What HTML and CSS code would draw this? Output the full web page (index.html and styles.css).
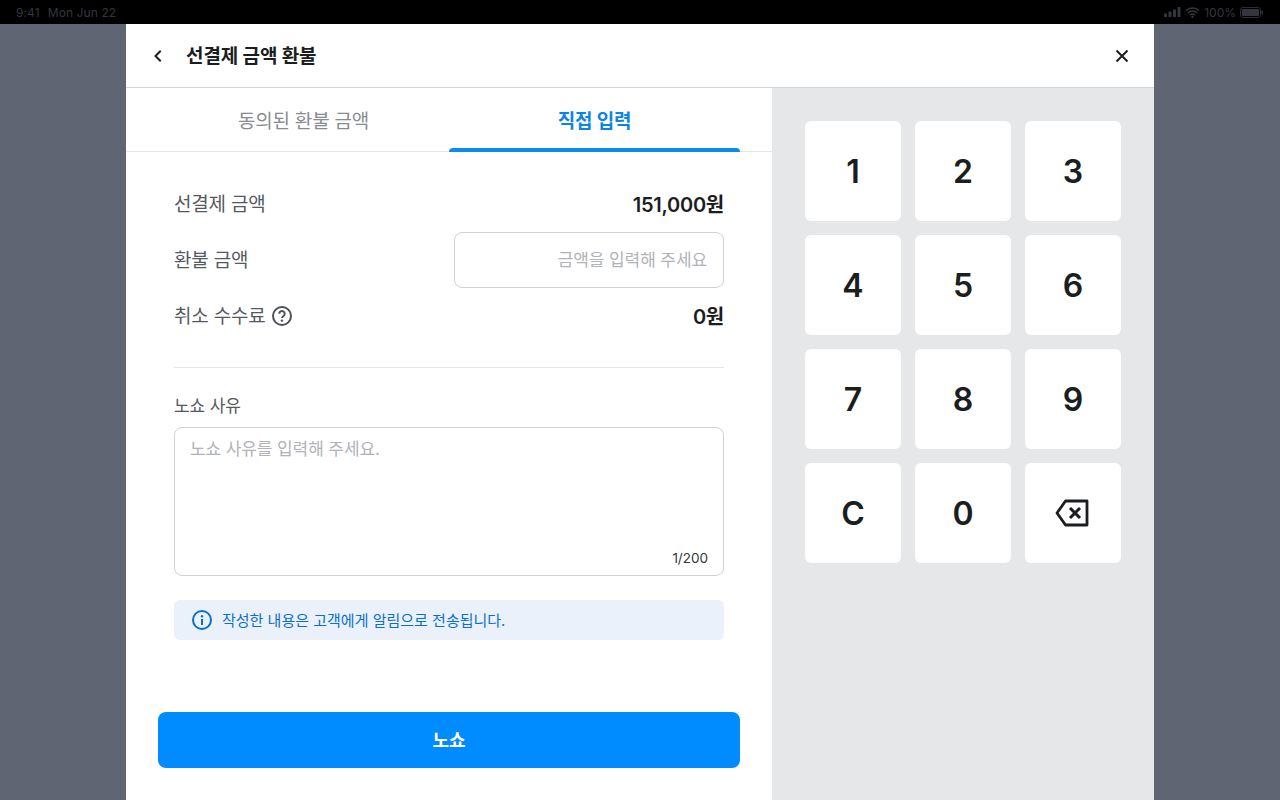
FILE: index.html
```html
<!DOCTYPE html>
<html lang="ko">
<head>
<meta charset="utf-8">
<title>선결제 금액 환불</title>
<link rel="stylesheet" href="styles.css">
</head>
<body>
<div class="status">
  <div class="status-left"><span>9:41</span><span>Mon Jun 22</span></div>
  <div class="status-right">
    <svg width="17" height="10" viewBox="0 0 17 10"><rect x="0" y="6.5" width="3" height="3.5" rx=".6"/><rect x="4.5" y="4.5" width="3" height="5.5" rx=".6"/><rect x="9" y="2.5" width="3" height="7.5" rx=".6"/><rect x="13.5" y="0" width="3" height="10" rx=".6"/></svg>
    <svg width="15" height="11" viewBox="0 0 15 11"><path d="M1 3.8a9.2 9.2 0 0 1 13 0M3 6a6.3 6.3 0 0 1 9 0M5 8.1a3.4 3.4 0 0 1 5 0" fill="none" stroke="#33373d" stroke-width="1.5"/><circle cx="7.5" cy="9.7" r="1.2"/></svg>
    <span>100%</span>
    <svg width="23" height="11" viewBox="0 0 23 11"><rect x=".5" y=".5" width="20" height="10" rx="2.5" fill="none" stroke="#2a2d32"/><rect x="2" y="2" width="17" height="7" rx="1"/><rect x="21.500" y="3.500" width="1.400" height="4" rx=".7"/></svg>
  </div>
</div>
<main class="backdrop">
  <section class="modal">
    <header class="modal-head">
      <div class="head-left">
        <svg class="ico-back" width="24" height="24" viewBox="0 0 24 24"><path d="M14 7.500 9.500 12l4.500 4.500" fill="none" stroke="#1b1d1f" stroke-width="2" stroke-linecap="square"/></svg>
        <h1>선결제 금액 환불</h1>
      </div>
      <svg width="24" height="24" viewBox="0 0 24 24"><path d="M6.500 6.500l11 11M17.500 6.500l-11 11" fill="none" stroke="#1b1d1f" stroke-width="2"/></svg>
    </header>
    <div class="modal-body">
      <div class="left">
        <nav class="tabs">
          <div class="tab">동의된 환불 금액</div>
          <div class="tab tab-on">직접 입력</div>
        </nav>
        <div class="form">
          <div class="row row-a"><span class="lab">선결제 금액</span><strong class="val">151,000원</strong></div>
          <div class="row row-b"><span class="lab">환불 금액</span><div class="amount">금액을 입력해 주세요</div></div>
          <div class="row row-c">
            <span class="lab lab-help">취소 수수료
              <svg width="22" height="22" viewBox="0 0 22 22"><circle cx="11" cy="11" r="9" fill="none" stroke="#4e5258" stroke-width="2"/><path d="M8.300 8.800a2.700 2.700 0 1 1 4.200 2.200c-.9.6-1.500 1.100-1.500 2.100" fill="none" stroke="#4e5258" stroke-width="2"/><circle cx="11" cy="15.600" r="1.200" fill="#4e5258"/></svg>
            </span>
            <strong class="val">0원</strong>
          </div>
          <hr class="rule">
          <label class="sub">노쇼 사유</label>
          <div class="area">
            <span class="area-ph">노쇼 사유를 입력해 주세요.</span>
            <span class="count">1/200</span>
          </div>
          <div class="notice">
            <svg width="22" height="22" viewBox="0 0 22 22"><circle cx="11" cy="11" r="9" fill="none" stroke="#0b6fd0" stroke-width="2"/><circle cx="11" cy="7.200" r="1.200" fill="#0b6fd0"/><path d="M11 10v6" stroke="#0b6fd0" stroke-width="2"/></svg>
            <span>작성한 내용은 고객에게 알림으로 전송됩니다.</span>
          </div>
        </div>
        <div class="cta">노쇼</div>
      </div>
      <div class="right">
        <div class="pad">
          <div class="key">1</div><div class="key">2</div><div class="key">3</div>
          <div class="key">4</div><div class="key">5</div><div class="key">6</div>
          <div class="key">7</div><div class="key">8</div><div class="key">9</div>
          <div class="key">C</div><div class="key">0</div>
          <div class="key"><svg class="ico-del" width="34" height="28" viewBox="0 0 34 28"><path d="M32 2H10.500L2 14l8.500 12H32z" fill="none" stroke="#1b1d1f" stroke-width="2.800" stroke-linejoin="round"/><path d="M15 9l10 10M25 9 15 19" fill="none" stroke="#1b1d1f" stroke-width="3"/></svg></div>
        </div>
      </div>
    </div>
  </section>
</main>
</body>
</html>
```
FILE: styles.css
```css
* { box-sizing: border-box; }
html, body { margin: 0; height: 800px; overflow: hidden; }
body {
  font-family: Inter, "Noto Sans CJK KR", sans-serif;
  color: #1b1d1f;
  background: #5f6572;
}
.status {
  height: 24px;
  background: #000;
  color: #33373d;
  font-size: 12px;
  display: flex;
  justify-content: space-between;
  align-items: center;
  padding: 0 16px;
  fill: #33373d;
}
.status-left { display: flex; gap: 8px; letter-spacing: .1px; }
.status-right { display: flex; align-items: center; gap: 4px; margin-right: 1px; }
.backdrop { height: 776px; padding: 0 126px; }
.modal { height: 776px; background: #fff; display: flex; flex-direction: column; }
.modal-head {
  height: 64px;
  border-bottom: 1px solid #d3d5d8;
  display: flex;
  align-items: center;
  justify-content: space-between;
  padding: 0 20px;
}
.head-left { display: flex; align-items: center; gap: 16px; }
h1 { margin: 0 0 2px; font-size: 19px; letter-spacing: -.1px; font-weight: 700; }
.modal-body { flex: 1; display: flex; min-height: 0; }
.left { width: 646px; display: flex; flex-direction: column; }
.right { flex: 1; background: #e5e7e9; padding: 33px; }
.tabs { height: 64px; display: flex; padding: 0 32px; border-bottom: 1px solid #e5e7e9; }
.tab {
  flex: 1;
  display: flex;
  align-items: center;
  justify-content: center;
  font-size: 19px;
  letter-spacing: -.2px;
  color: #888c92;
}
.tab-on { position: relative; color: #0b84e8; font-weight: 700; }
.tab-on::after {
  content: "";
  position: absolute;
  left: 0;
  right: 0;
  bottom: -1px;
  height: 4px;
  background: #0b8ced;
  border-radius: 4px 4px 0 0;
}
.form { padding: 36px 48px 0; height: 560px; }
.row { display: flex; justify-content: space-between; align-items: center; }
.row-a { height: 32px; }
.row-b { height: 56px; margin-top: 12px; }
.row-c { height: 32px; margin-top: 12px; }
.lab { font-size: 19px; line-height: 24px; padding-top: 2px; letter-spacing: -.2px; color: #55595f; }
.lab-help { display: flex; align-items: center; gap: 5px; }
.lab-help svg { margin-top: -2px; }
.val { font-size: 20px; line-height: 24px; padding-top: 2px; letter-spacing: -.25px; font-weight: 600; color: #1b1d1f; }
.amount {
  width: 270px;
  height: 56px;
  border: 1px solid #cfd1d4;
  border-radius: 8px;
  display: flex;
  align-items: center;
  justify-content: flex-end;
  padding: 0 16px 3px;
  font-size: 17px;
  letter-spacing: -.1px;
  color: #b0b3b8;
}
.rule { border: 0; border-top: 1px solid #e5e7e9; margin: 35px 0 0; }
.sub { display: block; margin-top: 26px; font-size: 17px; line-height: 24px; letter-spacing: -.1px; color: #55595f; }
.area {
  margin-top: 9px;
  height: 149px;
  border: 1px solid #cfd1d4;
  border-radius: 8px;
  padding: 9px 15px 7px;
  display: flex;
  flex-direction: column;
  justify-content: space-between;
  font-size: 17px;
  letter-spacing: -.1px;
  line-height: 24px;
}
.area-ph { color: #b0b3b8; }
.count { align-self: flex-end; font-size: 13.500px; letter-spacing: 0; line-height: 20px; color: #33373d; }
.notice {
  margin-top: 24px;
  height: 40px;
  background: #ebf1fa;
  border-radius: 6px;
  display: flex;
  align-items: center;
  gap: 9px;
  padding: 0 17px;
  font-size: 15px;
  color: #0b6fd0;
}
.notice span { margin-bottom: 2px; }
.cta {
  margin: 0 32px;
  height: 56px;
  border-radius: 8px;
  background: #008cff;
  color: #fff;
  font-size: 18px;
  font-weight: 700;
  padding-bottom: 2px;
  display: flex;
  align-items: center;
  justify-content: center;
}
.pad { display: grid; grid-template-columns: repeat(3, 96px); grid-auto-rows: 100px; gap: 14px; }
.key {
  background: #fff;
  border-radius: 6px;
  display: flex;
  align-items: center;
  justify-content: center;
  font-size: 32px;
  font-weight: 600;
  color: #1b1d1f;
}
.ico-del { margin-left: -2px; }
```
